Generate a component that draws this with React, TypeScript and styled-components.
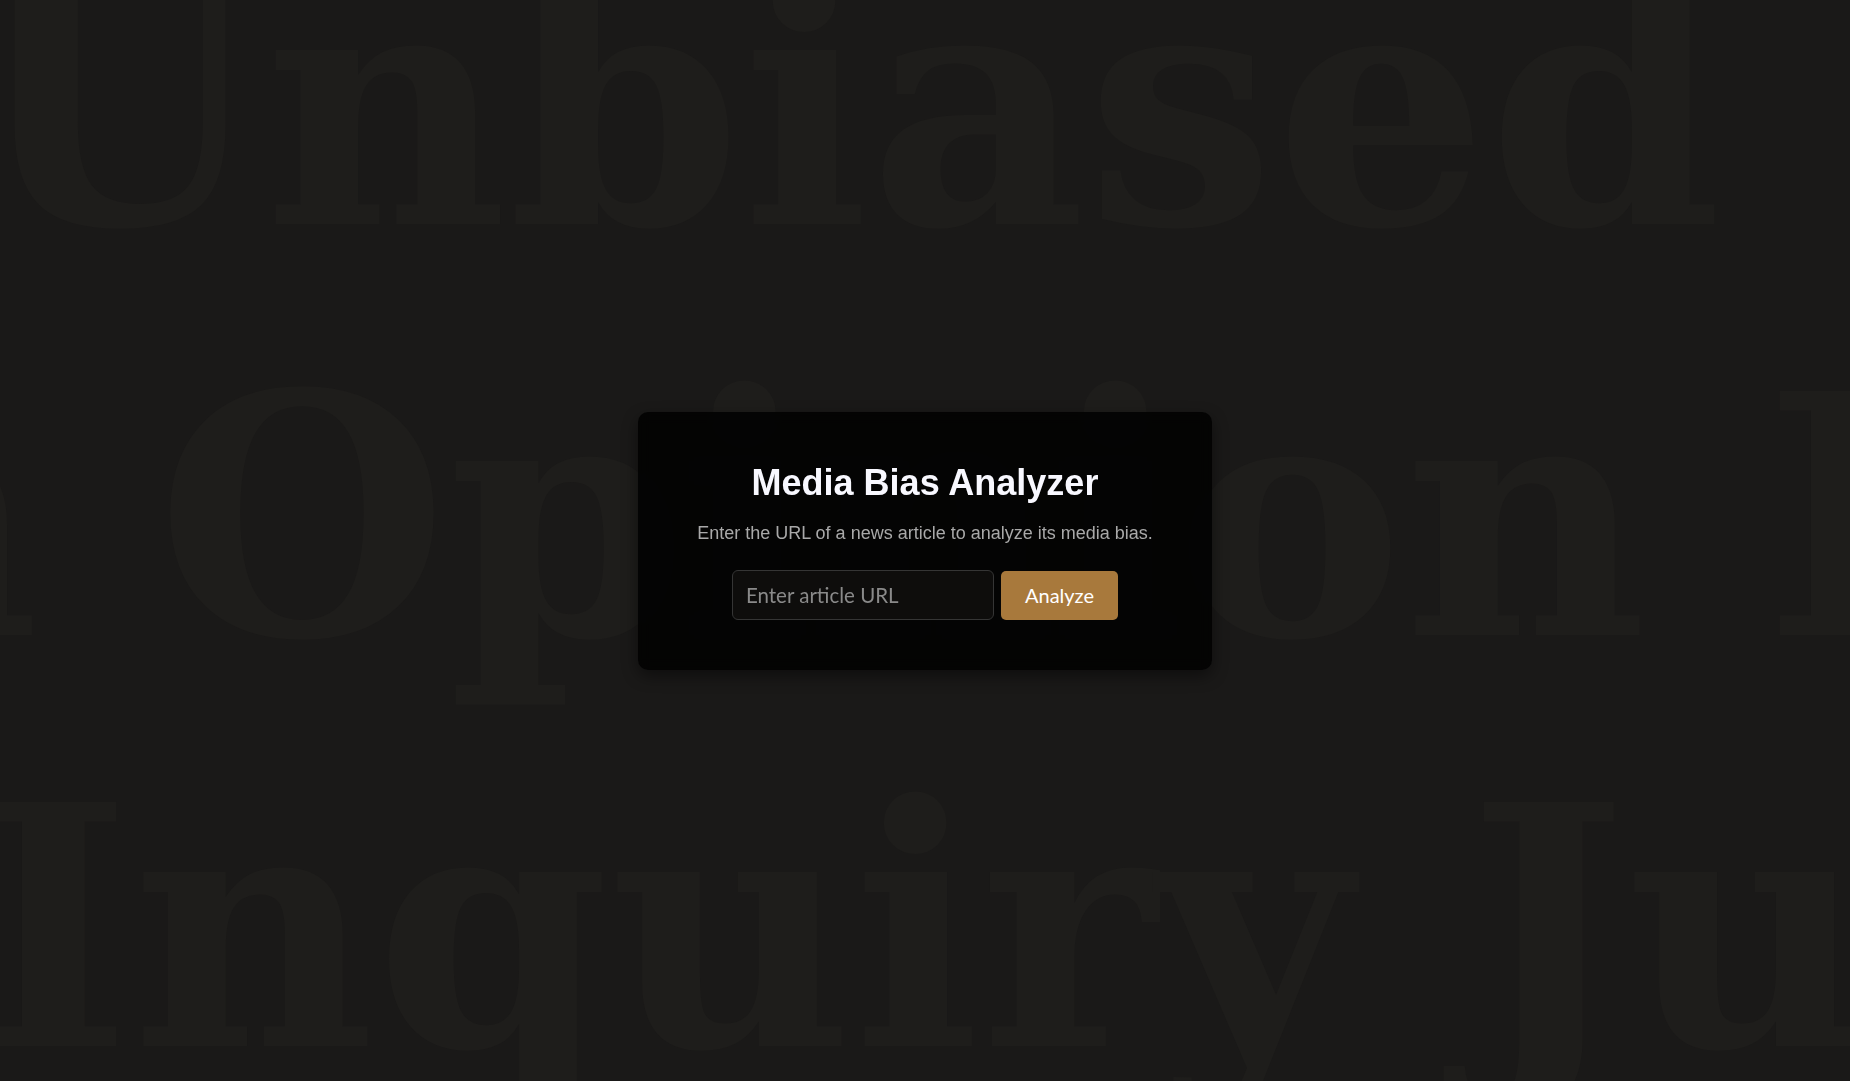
import styled, { createGlobalStyle } from "styled-components";

const GlobalStyle = createGlobalStyle`
  html, body {
    margin: 0;
    padding: 0;
    background: #1a1918;
  }
  * {
    box-sizing: border-box;
  }
`;

const Stage = styled.div`
  position: relative;
  display: flex;
  justify-content: center;
  align-items: center;
  width: 100vw;
  height: 100vh;
  overflow: hidden;
  background: #1a1918;
`;

// giant faint words behind the card
const Backdrop = styled.div`
  position: absolute;
  inset: 0;
  overflow: hidden;
  pointer-events: none;
  user-select: none;
  display: flex;
  flex-direction: column;
  margin-top: -99px;
  font-family: "DejaVu Serif", "Liberation Serif", serif;
  font-weight: 700;
  font-size: 335px;
  line-height: 411px;
  color: #1e1d1b;
`;

const Word = styled.div<{ $shift: number }>`
  white-space: nowrap;
  margin-left: ${(p) => p.$shift}px;
`;

const Card = styled.div`
  position: relative;
  width: 574px;
  padding: 50px 32px;
  border-radius: 10px;
  background: rgba(2, 2, 2, 0.92);
  backdrop-filter: blur(6px);
  box-shadow: 0 6px 16px rgba(0, 0, 0, 0.45);
  text-align: center;
`;

const Title = styled.h1`
  margin: 0 0 19px;
  font-family: "Liberation Sans", Arial, sans-serif;
  font-weight: 700;
  font-size: 36px;
  line-height: normal;
  color: #f8f8ff;
`;

const Subtitle = styled.p`
  margin: 0 0 26px;
  font-family: "Liberation Sans", Arial, sans-serif;
  font-size: 18px;
  line-height: normal;
  color: #a9a9a9;
`;

const Form = styled.form`
  display: flex;
  justify-content: center;
  align-items: flex-end;
  gap: 7px;
`;

const UrlInput = styled.input`
  width: 262px;
  height: 50px;
  padding: 0 13px;
  border: 1px solid #353535;
  border-radius: 6px;
  background: #0e0d0c;
  color: #e6e6e6;
  font-family: Lato, "Open Sans", sans-serif;
  font-size: 20.5px;
  outline: none;

  &::placeholder {
    color: #8a8a8a;
  }
`;

const AnalyzeButton = styled.button`
  height: 49px;
  padding: 0 24px;
  border: none;
  border-radius: 5px;
  background: #a8793c;
  color: #ffffff;
  font-family: Lato, "Open Sans", sans-serif;
  font-size: 20px;
  cursor: pointer;
`;

const rows = [
  { text: "Unbiased Insight", shift: -28 },
  { text: "n Opinion Integrity", shift: -204 },
  { text: "Inquiry Justice", shift: -25 },
];

function App() {
  return (
    <>
      <GlobalStyle />
      <Stage>
        <Backdrop aria-hidden="true">
          {rows.map((r) => (
            <Word key={r.text} $shift={r.shift}>
              {r.text}
            </Word>
          ))}
        </Backdrop>
        <Card>
          <Title>Media Bias Analyzer</Title>
          <Subtitle>Enter the URL of a news article to analyze its media bias.</Subtitle>
          <Form onSubmit={(e) => e.preventDefault()}>
            <UrlInput type="text" placeholder="Enter article URL" />
            <AnalyzeButton type="submit">Analyze</AnalyzeButton>
          </Form>
        </Card>
      </Stage>
    </>
  );
}

export default App;
